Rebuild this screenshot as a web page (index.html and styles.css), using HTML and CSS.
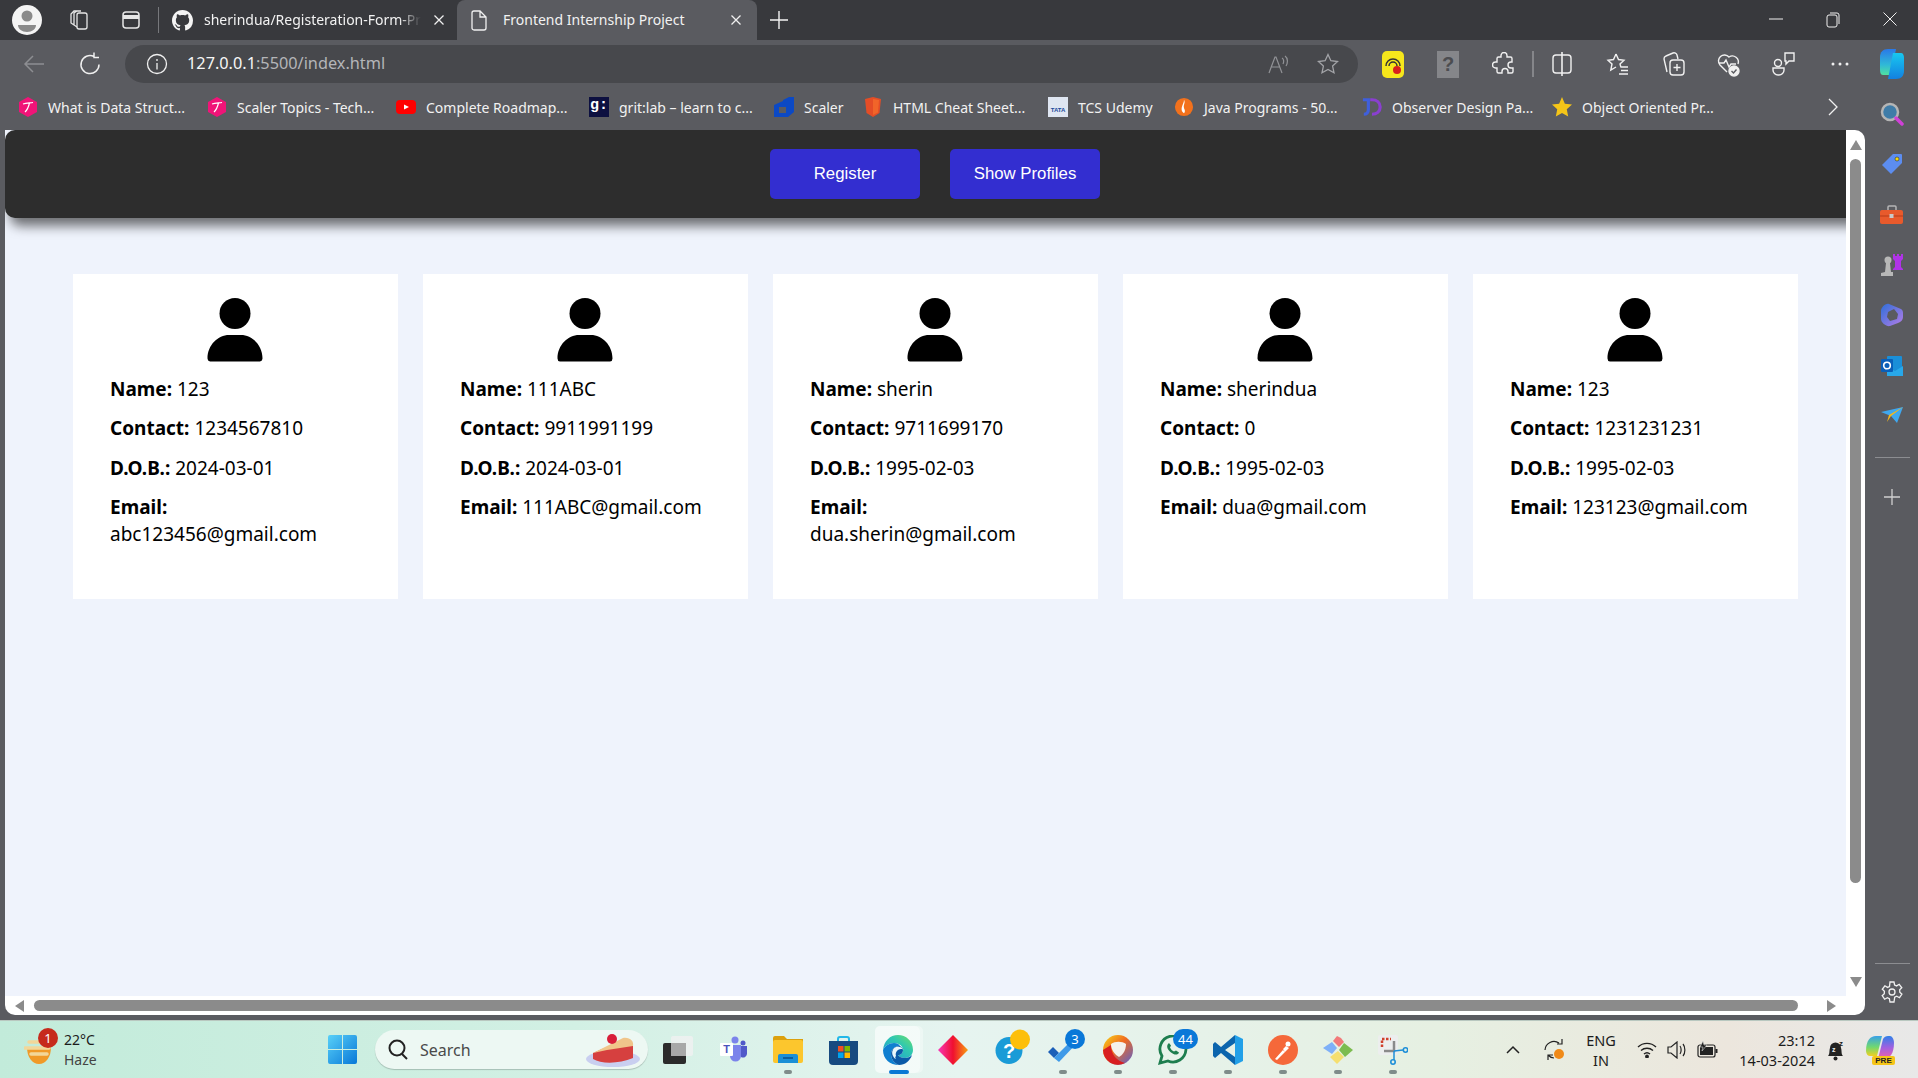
FILE: index.html
```html
<!DOCTYPE html>
<html lang="en">
<head>
    <meta charset="UTF-8">
    <title>Frontend Internship Project</title>
    <link rel="stylesheet" href="styles.css">
</head>
<body>
<div class="window">
    <!-- Tab strip -->
    <div class="tabstrip">
        <div class="strip-btn">
            <svg width="30" height="30" viewBox="0 0 30 30"><circle cx="15" cy="15" r="15" fill="#f4f4f4"/><circle cx="15" cy="11" r="5.5" fill="#8a8a8a"/><path d="M6 20h18c0 4-4 7-9 7s-9-3-9-7z" fill="#8a8a8a"/></svg>
        </div>
        <div class="strip-btn">
            <svg width="24" height="24" viewBox="0 0 24 24" fill="none" stroke="#e6e6e6" stroke-width="1.3"><rect x="10" y="5" width="10" height="16" rx="2"/><path d="M10 19l-3-2V5l3-2h4M7 17l-3-2V6l3-3h4"/></svg>
        </div>
        <div class="strip-btn">
            <svg width="22" height="22" viewBox="0 0 22 22" fill="none" stroke="#e6e6e6" stroke-width="1.5"><rect x="3" y="3" width="16" height="16" rx="3"/><path d="M3 8h16" stroke-width="4"/></svg>
        </div>
        <div class="strip-sep"></div>
        <div class="tab">
            <svg class="tab-icon" width="21" height="21" viewBox="0 0 16 16"><path fill="#f4f4f4" d="M8 0C3.58 0 0 3.58 0 8c0 3.54 2.29 6.53 5.47 7.59.4.07.55-.17.55-.38 0-.19-.01-.82-.01-1.49-2.01.37-2.53-.49-2.69-.94-.09-.23-.48-.94-.82-1.13-.28-.15-.68-.52-.01-.53.63-.01 1.08.58 1.23.82.72 1.21 1.87.87 2.33.66.07-.52.28-.87.51-1.07-1.78-.2-3.64-.89-3.64-3.95 0-.87.31-1.59.82-2.15-.08-.2-.36-1.02.08-2.12 0 0 .67-.21 2.2.82.64-.18 1.32-.27 2-.27.68 0 1.36.09 2 .27 1.53-1.04 2.2-.82 2.2-.82.44 1.1.16 1.92.08 2.12.51.56.82 1.27.82 2.15 0 3.07-1.87 3.75-3.65 3.95.29.25.54.73.54 1.48 0 1.07-.01 1.93-.01 2.2 0 .21.15.46.55.38A8.013 8.013 0 0016 8c0-4.42-3.58-8-8-8z"/></svg>
            <span class="tab-title faded">sherindua/Registeration-Form-Pr</span>
            <svg class="tab-close" width="12" height="12" viewBox="0 0 12 12" stroke="#f0f0f0" stroke-width="1.3"><path d="M1.5 1.5l9 9M10.5 1.5l-9 9"/></svg>
        </div>
        <div class="tab active">
            <svg class="tab-icon" width="16" height="21" viewBox="0 0 16 21" fill="none" stroke="#f0f0f0" stroke-width="1.3"><path d="M3 1h6l6 6v11a2 2 0 0 1-2 2H3a2 2 0 0 1-2-2V3a2 2 0 0 1 2-2zM9 1v6h6"/></svg>
            <span class="tab-title">Frontend Internship Project</span>
            <svg class="tab-close" width="12" height="12" viewBox="0 0 12 12" stroke="#f0f0f0" stroke-width="1.3"><path d="M1.5 1.5l9 9M10.5 1.5l-9 9"/></svg>
        </div>
        <div class="new-tab">
            <svg width="18" height="18" viewBox="0 0 18 18" stroke="#f4f4f4" stroke-width="1.4"><path d="M9 0v18M0 9h18"/></svg>
        </div>
        <div class="win-controls">
            <div class="win-btn"><svg width="14" height="14" viewBox="0 0 14 14" stroke="#f0f0f0"><path d="M0 7h14"/></svg></div>
            <div class="win-btn"><svg width="14" height="16" viewBox="0 0 14 16" fill="none" stroke="#f0f0f0"><rect x="1" y="3" width="10" height="12" rx="2"/><path d="M4 1h7a2 2 0 0 1 2 2v9"/></svg></div>
            <div class="win-btn"><svg width="14" height="14" viewBox="0 0 14 14" stroke="#f0f0f0"><path d="M.5.5l13 13M13.5.5l-13 13"/></svg></div>
        </div>
    </div>

    <!-- Address bar and toolbar -->
    <div class="toolbar">
        <div class="nav-btn"><svg width="22" height="20" viewBox="0 0 22 20" fill="none" stroke="#8d8e92" stroke-width="1.5"><path d="M21 10H2M10 2l-8 8 8 8"/></svg></div>
        <div class="nav-btn"><svg width="22" height="24" viewBox="0 0 22 24" fill="none" stroke="#f0f0f0" stroke-width="1.5"><path d="M15 4.5a9 9 0 1 0 5 8M15 .5v5h5"/></svg></div>
        <div class="addressbar">
            <svg class="info-icon" width="22" height="22" viewBox="0 0 22 22" fill="none" stroke="#f0f0f0" stroke-width="1.3"><circle cx="11" cy="11" r="9.5"/><path d="M11 10v6.500M11 6v2"/></svg>
            <span class="url"><span class="url-host">127.0.0.1</span>:5500/index.html</span>
            <div class="address-actions">
                <div class="address-btn"><svg width="22" height="22" viewBox="0 0 22 22" fill="none" stroke="#929397" stroke-width="1.2"><path d="M1 20L7 4h1l6 16M3.500 14h8M14 5c2 1 2 4 1 6M17 3c3 2 3 7 1 10"/></svg></div>
                <div class="address-btn"><svg width="22" height="22" viewBox="0 0 22 22" fill="none" stroke="#a3a4a8" stroke-width="1.3"><path d="M11 1.500l2.900 6.200 6.700.8-5 4.600 1.400 6.700-6-3.400-6 3.400 1.400-6.700-5-4.600 6.700-.8z"/></svg></div>
            </div>
        </div>
        <div class="tools">
            <div class="tool"><svg width="22" height="27" viewBox="0 0 22 27"><rect width="22" height="27" rx="5" fill="#f6e71c"/><path d="M4 15a7 7 0 0 1 14 0M7 15a4 4 0 0 1 8 0" fill="none" stroke="#333" stroke-width="1.500"/><circle cx="15" cy="19" r="4" fill="#d8201c"/></svg></div>
            <div class="tool"><svg width="22" height="27" viewBox="0 0 22 27"><rect width="22" height="27" fill="#85868a"/><text x="11" y="20" text-anchor="middle" class="svg-q">?</text></svg></div>
            <div class="tool"><svg width="24" height="24" viewBox="0 0 24 24" fill="none" stroke="#f0f0f0" stroke-width="1.4"><path d="M9 3.500a3 3 0 0 1 6 0V5h3.500A1.500 1.500 0 0 1 20 6.500V10h-1a3 3 0 0 0 0 6h2v3.500a1.500 1.500 0 0 1-1.500 1.500H16v-1.500a3 3 0 0 0-6 0V21H6.500A1.500 1.500 0 0 1 5 19.500V16H3.500a3 3 0 0 1 0-6H5V6.500A1.500 1.500 0 0 1 6.500 5H9z"/></svg></div>
            <div class="tool-sep"></div>
            <div class="tool"><svg width="22" height="24" viewBox="0 0 22 24" fill="none" stroke="#f0f0f0" stroke-width="1.4"><rect x="2" y="3" width="18" height="18" rx="3"/><path d="M11 0v24" stroke-width="1.600"/></svg></div>
            <div class="tool"><svg width="24" height="24" viewBox="0 0 24 24" fill="none" stroke="#f0f0f0" stroke-width="1.4"><path d="M10 2l2.500 5.500 5.500.7-4 3.800 1 3.500M10 2L7.500 7.500 2 8.200l4 3.800-1.200 6L10 15M15 15h7M15 18.500h7M13 22h9" /></svg></div>
            <div class="tool"><svg width="24" height="26" viewBox="0 0 24 26" fill="none" stroke="#f0f0f0" stroke-width="1.4"><path d="M6 21L3 8a3 3 0 0 1 2-3l7-3a3 3 0 0 1 4 2l1 4"/><rect x="9" y="9" width="14" height="15" rx="3"/><path d="M16 13v7M12.500 16.500h7"/></svg></div>
            <div class="tool"><svg width="24" height="26" viewBox="0 0 24 26" fill="none" stroke="#f0f0f0" stroke-width="1.4"><path d="M10 21L3 14a6 6 0 0 1 9-8 6 6 0 0 1 9 7M2 12h5l2-3 3 7 2-3h5"/><circle cx="17" cy="20" r="5" fill="#f0f0f0"/><path d="M14.500 20l2 2 3-3.500" stroke="#5a5b60"/></svg></div>
            <div class="tool"><svg width="24" height="26" viewBox="0 0 24 26" fill="none" stroke="#f0f0f0" stroke-width="1.4"><circle cx="6" cy="12" r="3.500"/><path d="M1 17h11v2a5 5 0 0 1-5 5H6a5 5 0 0 1-5-5zM13 2h9v8h-5l-3 3v-3h-1z"/></svg></div>
            <div class="tool"><svg width="20" height="4" viewBox="0 0 20 4" fill="#f0f0f0"><circle cx="3" cy="2" r="1.500"/><circle cx="10" cy="2" r="1.500"/><circle cx="17" cy="2" r="1.500"/></svg></div>
            <div class="tool copilot-tool"><svg width="30" height="36" viewBox="0 0 30 36"><defs><linearGradient id="cpA" x1="0" y1="0" x2="0" y2="1"><stop offset="0" stop-color="#2a78e8"/><stop offset=".6" stop-color="#2fb8d8"/><stop offset="1" stop-color="#50e0a0"/></linearGradient><linearGradient id="cpB" x1="0" y1="0" x2="0" y2="1"><stop offset="0" stop-color="#18c8f0"/><stop offset="1" stop-color="#1380e0"/></linearGradient></defs><path d="M3 24V11C3 6 6 3 11 3h8l-5 26H6c-2 0-3-2-3-5z" fill="url(#cpA)"/><path d="M27 12v13c0 5-3 8-8 8h-8l5-26h8c2 0 3 2 3 5z" fill="url(#cpB)"/></svg></div>
        </div>
    </div>

    <div class="body-row">
        <div class="main-col">
            <!-- Favorites bar -->
            <div class="bookmarks">
                <div class="bookmark"><svg viewBox="0 0 20 20"><path d="M10 0l9 5v10l-9 5-9-5V5z" fill="#f01478"/><path d="M5 7c3-1 7-1 10-1.500M11.500 6c-1 4-2 7-4.500 9" fill="none" stroke="#fff" stroke-width="1.200"/></svg><span>What is Data Struct...</span></div>
                <div class="bookmark"><svg viewBox="0 0 20 20"><path d="M10 0l9 5v10l-9 5-9-5V5z" fill="#f01478"/><path d="M5 7c3-1 7-1 10-1.500M11.500 6c-1 4-2 7-4.500 9" fill="none" stroke="#fff" stroke-width="1.200"/></svg><span>Scaler Topics - Tech...</span></div>
                <div class="bookmark"><svg viewBox="0 0 20 20"><rect y="3" width="20" height="14" rx="4" fill="#f00"/><path d="M8 7.500l5 2.500-5 2.500z" fill="#fff"/></svg><span>Complete Roadmap...</span></div>
                <div class="bookmark"><div class="grit-icon">g:</div><span>grit:lab – learn to c...</span></div>
                <div class="bookmark"><svg viewBox="0 0 20 20"><path d="M0 8l9-4v-1l6-3h5v15l-6 5H0z" fill="#0c49c4"/><path d="M5 10h7v6H5z" fill="#5a5b60"/></svg><span>Scaler</span></div>
                <div class="bookmark"><svg viewBox="0 0 18 20"><path d="M1 2l8-2 8 2-1.500 14L9 20l-6.500-4z" fill="#e44d26"/><path d="M9 2v16l5-2.500L15 3z" fill="#f16529"/></svg><span>HTML Cheat Sheet...</span></div>
                <div class="bookmark"><div class="tata-icon">TATA</div><span>TCS Udemy</span></div>
                <div class="bookmark"><svg viewBox="0 0 20 22"><circle cx="10" cy="11" r="10" fill="#f2711c"/><path d="M10 3c2 4-1 5 0 9 .5 2 2 3 0 6-3-2-3-5-2-8 .5-2 2-4 2-7z" fill="#fff"/></svg><span>Java Programs - 50...</span></div>
                <div class="bookmark"><svg viewBox="0 0 22 22" fill="none" stroke-width="3.500"><path d="M1 3h6v11c0 3-2 5-5 5" stroke="#3f5fdc"/><path d="M9 3h2c5 0 9 3 9 8s-4 8-9 8" stroke="#8a3fd0"/></svg><span>Observer Design Pa...</span></div>
                <div class="bookmark"><svg viewBox="0 0 21 21"><path d="M10.500 0l3 7 7.500.8-5.500 5 1.500 7.700-6.500-3.800-6.500 3.800 1.500-7.700L0 7.800 7.500 7z" fill="#f5c518"/></svg><span>Object Oriented Pr...</span></div>
                <div class="bookmark-more"><svg width="10" height="20" viewBox="0 0 10 20" fill="none" stroke="#f0f0f0" stroke-width="1.300"><path d="M1 2l8 8-8 8"/></svg></div>
            </div>

            <!-- Browser viewport -->
            <div class="frame">
                <div class="viewport">
                    <div class="site-header">
                        <button class="site-btn">Register</button>
                        <button class="site-btn">Show Profiles</button>
                    </div>
                    <div class="profiles">
                        <div class="profile-card">
                            <svg class="profile-icon" width="64" height="64" viewBox="0 0 64 64"><circle cx="32" cy="15.500" r="15.500"/><path d="M7 63.500h50a3 3 0 0 0 2.500-3C59.500 47 49 37 38 37H26C15 37 4.500 47 4.500 60.500a3 3 0 0 0 2.500 3z"/></svg>
                            <p><strong>Name:</strong> 123</p>
                            <p><strong>Contact:</strong> 1234567810</p>
                            <p><strong>D.O.B.:</strong> 2024-03-01</p>
                            <p><strong>Email:</strong> abc123456@gmail.com</p>
                        </div>
                        <div class="profile-card">
                            <svg class="profile-icon" width="64" height="64" viewBox="0 0 64 64"><circle cx="32" cy="15.500" r="15.500"/><path d="M7 63.500h50a3 3 0 0 0 2.500-3C59.500 47 49 37 38 37H26C15 37 4.500 47 4.500 60.500a3 3 0 0 0 2.500 3z"/></svg>
                            <p><strong>Name:</strong> 111ABC</p>
                            <p><strong>Contact:</strong> 9911991199</p>
                            <p><strong>D.O.B.:</strong> 2024-03-01</p>
                            <p><strong>Email:</strong> 111ABC@gmail.com</p>
                        </div>
                        <div class="profile-card">
                            <svg class="profile-icon" width="64" height="64" viewBox="0 0 64 64"><circle cx="32" cy="15.500" r="15.500"/><path d="M7 63.500h50a3 3 0 0 0 2.500-3C59.500 47 49 37 38 37H26C15 37 4.500 47 4.500 60.500a3 3 0 0 0 2.500 3z"/></svg>
                            <p><strong>Name:</strong> sherin</p>
                            <p><strong>Contact:</strong> 9711699170</p>
                            <p><strong>D.O.B.:</strong> 1995-02-03</p>
                            <p><strong>Email:</strong> dua.sherin@gmail.com</p>
                        </div>
                        <div class="profile-card">
                            <svg class="profile-icon" width="64" height="64" viewBox="0 0 64 64"><circle cx="32" cy="15.500" r="15.500"/><path d="M7 63.500h50a3 3 0 0 0 2.500-3C59.500 47 49 37 38 37H26C15 37 4.500 47 4.500 60.500a3 3 0 0 0 2.500 3z"/></svg>
                            <p><strong>Name:</strong> sherindua</p>
                            <p><strong>Contact:</strong> 0</p>
                            <p><strong>D.O.B.:</strong> 1995-02-03</p>
                            <p><strong>Email:</strong> dua@gmail.com</p>
                        </div>
                        <div class="profile-card">
                            <svg class="profile-icon" width="64" height="64" viewBox="0 0 64 64"><circle cx="32" cy="15.500" r="15.500"/><path d="M7 63.500h50a3 3 0 0 0 2.500-3C59.500 47 49 37 38 37H26C15 37 4.500 47 4.500 60.500a3 3 0 0 0 2.500 3z"/></svg>
                            <p><strong>Name:</strong> 123</p>
                            <p><strong>Contact:</strong> 1231231231</p>
                            <p><strong>D.O.B.:</strong> 1995-02-03</p>
                            <p><strong>Email:</strong> 123123@gmail.com</p>
                        </div>
                    </div>
                </div>
                <div class="vscroll">
                    <div class="arrow-up"></div>
                    <div class="vthumb"></div>
                    <div class="arrow-down"></div>
                </div>
                <div class="hscroll">
                    <div class="arrow-left"></div>
                    <div class="hthumb"></div>
                    <div class="arrow-right"></div>
                </div>
                <div class="scroll-corner"></div>
            </div>
        </div>

        <!-- Edge sidebar -->
        <div class="sidebar">
            <div class="side-btn"><svg width="24" height="24" viewBox="0 0 24 24"><circle cx="10" cy="10" r="8" fill="#3f7ca8" stroke="#b5b5b5" stroke-width="2.500"/><path d="M16 16l6 6" stroke="#d040d8" stroke-width="3.500" stroke-linecap="round"/></svg></div>
            <div class="side-btn"><svg width="22" height="22" viewBox="0 0 22 22"><path d="M12 1h8a1 1 0 0 1 1 1v8L10 21 1 12z" fill="#5c8df0"/><circle cx="16" cy="6" r="2" fill="#f5d90a" stroke="#333" stroke-width=".6"/></svg></div>
            <div class="side-btn"><svg width="24" height="20" viewBox="0 0 24 20"><path d="M8 5V2a1 1 0 0 1 1-1h6a1 1 0 0 1 1 1v3" fill="none" stroke="#b5b5b5" stroke-width="1.500"/><rect y="5" width="23" height="14" rx="2" fill="#e85a2c"/><path d="M0 11h23" stroke="#b53a18" stroke-width="1"/><rect x="9.500" y="9" width="4" height="4" fill="#c9c9c9"/></svg></div>
            <div class="side-btn"><svg width="24" height="24" viewBox="0 0 24 24"><path d="M13 1h2v2h2V1h2v2h2V1h2v5l-2 2v6l2 2v1H13v-1l2-2V8l-2-2z" fill="#b033e8"/><circle cx="8" cy="7" r="3.500" fill="#b8b8b8"/><path d="M6 10h4l1 9h2v4H1v-3l4-1z" fill="#b8b8b8"/></svg></div>
            <div class="side-btn"><svg width="22" height="24" viewBox="0 0 22 24"><defs><linearGradient id="m3" x1="0" y1="0" x2="1" y2="1"><stop offset="0" stop-color="#2f6fd8"/><stop offset="1" stop-color="#b57de8"/></linearGradient></defs><path d="M8 1l12 5c2 1 2 3 2 5v3c0 3-2 5-5 6l-8 3c-3 1-9-3-9-7V8c0-3 4-8 8-7z" fill="url(#m3)"/><path d="M7 9l6-3 4 5-1 5-7 2-3-4z" fill="#5a5b60"/></svg></div>
            <div class="side-btn"><svg width="22" height="22" viewBox="0 0 22 22"><rect x="6" y="1" width="15" height="20" rx="1" fill="#1a8fd8"/><path d="M6 11l8 5 8-5v10H6z" fill="#28a8ea"/><rect y="4" width="12" height="13" rx="1" fill="#0a5fb8"/><circle cx="6" cy="10.500" r="3.300" fill="none" stroke="#fff" stroke-width="1.600"/></svg></div>
            <div class="side-btn"><svg width="22" height="18" viewBox="0 0 22 18"><path d="M0 5l22-5-6 16-6-7z" fill="#3fa8f0"/><path d="M22 0L8 8l-2 7 4-6z" fill="#f5b81a"/></svg></div>
            <div class="side-divider"></div>
            <div class="side-btn side-add"><svg width="16" height="16" viewBox="0 0 16 16" stroke="#d0d0d0" stroke-width="1.300"><path d="M8 0v16M0 8h16"/></svg></div>
            <div class="side-divider side-bottom"></div>
            <div class="side-btn side-gear"><svg width="22" height="22" viewBox="0 0 22 22" fill="none" stroke="#f0f0f0" stroke-width="1.300"><circle cx="11" cy="11" r="3"/><path d="M9 1h4l.6 3 2 .9 2.600-1.600 2.600 3.500-2.100 2 .1 2.400 2.100 2-2.400 3.500-2.800-1.500-2 1L13 21H9l-.6-3.300-2-1-2.800 1.500L1.200 14.700l2.100-2 .1-2.400-2.100-2 2.600-3.500 2.600 1.600 2-.9z"/></svg></div>
        </div>
    </div>

    <!-- Windows taskbar -->
    <div class="taskbar">
        <div class="weather">
            <svg class="weather-icon" width="30" height="30" viewBox="0 0 30 30"><path d="M3 12h24c0 10-5 17-12 17S3 22 3 12z" fill="#f09a28"/><path d="M5 7h14M1 13h24M7 19h16" stroke="#f2d79a" stroke-width="3.500" stroke-linecap="round"/></svg>
            <span class="weather-badge">1</span>
            <div class="weather-text"><span>22°C</span><span>Haze</span></div>
        </div>
        <div class="start">
            <svg width="29" height="29" viewBox="0 0 29 29"><defs><linearGradient id="winA" x1="0" y1="0" x2="1" y2="1"><stop offset="0" stop-color="#58d0f8"/><stop offset="1" stop-color="#0878d8"/></linearGradient></defs><path d="M0 2a2 2 0 0 1 2-2h12v14H0zM15 0h12a2 2 0 0 1 2 2v12H15zM0 15h14v14H2a2 2 0 0 1-2-2zM15 15h14v12a2 2 0 0 1-2 2H15z" fill="url(#winA)"/></svg>
        </div>
        <div class="searchbox">
            <svg width="20" height="21" viewBox="0 0 20 21" fill="none" stroke="#222" stroke-width="2"><circle cx="9" cy="9" r="7.500"/><path d="M14 15l5 5"/></svg>
            <span class="search-label">Search</span>
            <svg class="pie" width="56" height="34" viewBox="0 0 56 34"><ellipse cx="28" cy="26" rx="27" ry="8" fill="#c9cff0"/><path d="M8 20L38 7c6-1 10 2 10 6v12C34 31 16 31 8 26z" fill="#d6403f"/><path d="M8 20L38 5c7-1 11 3 10 8L22 17z" fill="#f0c58a"/><circle cx="27" cy="6" r="5" fill="#d81e3a"/></svg>
        </div>
        <div class="apps">
            <div class="app"><svg width="30" height="28" viewBox="0 0 30 28"><rect y="7" width="23" height="21" rx="2" fill="#2b2b2b"/><rect x="8" y="0" width="22" height="20" rx="2" fill="#eef0f0" opacity=".88"/><rect x="8" y="7" width="15" height="13" fill="#a8a8a8"/></svg></div>
            <div class="app"><svg width="27" height="27" viewBox="0 0 27 27"><circle cx="15" cy="4" r="3.500" fill="#7b83eb"/><circle cx="23" cy="7" r="2.500" fill="#5059c9"/><path d="M10 9h11v11a5 5 0 0 1-11 0z" fill="#7b83eb"/><path d="M21 10h6v8a4 4 0 0 1-6 3z" fill="#5059c9"/><rect y="7" width="13" height="13" rx="1" fill="#fff"/><text x="6.500" y="17" text-anchor="middle" class="svg-t">T</text></svg></div>
            <div class="app has-dot"><svg width="30" height="27" viewBox="0 0 30 27"><path d="M0 2a2 2 0 0 1 2-2h9l3 3h16v6H0z" fill="#dca00c"/><rect y="4" width="30" height="23" rx="2" fill="#fcc62d"/><path d="M5 27v-7a2 2 0 0 1 2-2h16a2 2 0 0 1 2 2v7z" fill="#1b8fd6"/><path d="M10 22h10" stroke="#0d5f9e" stroke-width="2"/></svg></div>
            <div class="app"><svg width="29" height="30" viewBox="0 0 29 30"><path d="M9 7V4a2 2 0 0 1 2-2h7a2 2 0 0 1 2 2v3" fill="none" stroke="#22b8e8" stroke-width="2"/><path d="M0 6h29v20a4 4 0 0 1-4 4H4a4 4 0 0 1-4-4z" fill="#174a80"/><rect x="9" y="11" width="5.500" height="5.500" fill="#f25022"/><rect x="15.500" y="11" width="5.500" height="5.500" fill="#7fba00"/><rect x="9" y="17.500" width="5.500" height="5.500" fill="#00a4ef"/><rect x="15.500" y="17.500" width="5.500" height="5.500" fill="#ffb900"/></svg></div>
            <div class="app app-active"><svg width="30" height="30" viewBox="0 0 30 30"><defs><linearGradient id="edgeA" x1="0" y1="1" x2="1" y2="0"><stop offset="0" stop-color="#1a9ad8"/><stop offset=".6" stop-color="#30c8b0"/><stop offset="1" stop-color="#6ee06a"/></linearGradient></defs><path d="M15 0c8 0 15 6 15 15 0 5-4 8-8 8-3 0-6-1-7-3 3 0 5-2 5-5 0-4-4-7-9-7-5 0-9 3-11 7C1 6 7 0 15 0z" fill="url(#edgeA)"/><path d="M0 15c2-4 6-7 11-7 3 0 5 1 6 3-5 0-9 3-9 8 0 5 3 9 8 11C7 30 0 24 0 15z" fill="#0f7fd0"/><path d="M16 30c-5-2-8-6-8-11 0-5 4-8 9-8 2 1 3 3 3 4 0 3-2 5-5 5 1 2 4 3 7 3 3 0 5-1 7-3-2 6-7 10-13 10z" fill="#0b5aa8"/><path d="M13 21c-1-3 1-7 5-7 2 0 3 0 2 1-.5-3-4-4-7-3-3 1-5 5-3 9 1 2 2 3 3 3-1-1-1-2 0-3z" fill="#e8f6fb"/></svg></div>
            <div class="app"><svg width="30" height="30" viewBox="0 0 30 30"><defs><linearGradient id="diaA" x1="0" y1="0" x2="1" y2="0"><stop offset="0" stop-color="#f838b8"/><stop offset=".5" stop-color="#f01030"/><stop offset="1" stop-color="#f8a010"/></linearGradient></defs><path d="M15 0l15 15-15 15L0 15z" fill="url(#diaA)"/></svg></div>
            <div class="app"><svg width="46" height="44" viewBox="0 0 46 44"><circle cx="24" cy="22.500" r="13.500" fill="#1a9bd7"/><text x="24" y="29.500" text-anchor="middle" class="svg-help">?</text><circle cx="35" cy="11.500" r="10" fill="#fdbf0a"/></svg></div>
            <div class="app has-dot"><svg width="30" height="30" viewBox="0 0 30 30"><path d="M0 17l5-5 6 6-5 5z" fill="#1b5fb8"/><path d="M6 23L26 3l4 4L11 27z" fill="#3f9ae8"/></svg><span class="app-badge">3</span></div>
            <div class="app has-dot"><svg width="30" height="30" viewBox="0 0 30 30"><defs><linearGradient id="opA" x1="0" y1="0" x2="1" y2="1"><stop offset="0" stop-color="#f8d818"/><stop offset=".45" stop-color="#f06a20"/><stop offset="1" stop-color="#5060d8"/></linearGradient></defs><circle cx="15" cy="15" r="15" fill="url(#opA)"/><path d="M0 15a15 15 0 0 0 22 13C14 26 8 20 8 10z" fill="#d81e20"/><path d="M8 9c4-3 11-3 15 0 0 6-3 11-7 13-4-2-8-7-8-13z" fill="#f4f1ec"/></svg></div>
            <div class="app has-dot"><svg width="30" height="30" viewBox="0 0 30 30"><path d="M2 28l2-7a13 13 0 1 1 6 5z" fill="none" stroke="#1d7d4e" stroke-width="2.800"/><path d="M10 9c-2 3 0 6 3 8.500s7 3 8 0l-3-2-2 1c-2-1-3-2-4-4l1-2-2-2.500z" fill="#1d7d4e"/></svg><span class="app-badge wide">44</span></div>
            <div class="app has-dot"><svg width="30" height="30" viewBox="0 0 30 30"><path d="M22 0L8 12 2 7 0 9v12l2 2 6-5 14 12v-8L12 15 22 8z" fill="#0c65ad"/><path d="M22 0l8 4v22l-8 4z" fill="#22a0e8"/></svg></div>
            <div class="app has-dot"><svg width="30" height="30" viewBox="0 0 30 30"><circle cx="15" cy="15" r="15" fill="#f5683a"/><circle cx="20" cy="9" r="2.500" fill="#fff"/><path d="M7 24l8-9 2 2-8 8zM15 14l3-3 3 2-4 4z" fill="#fff"/></svg></div>
            <div class="app has-dot"><svg width="30" height="28" viewBox="0 0 30 28"><path d="M14 0l4 2 3 4-5 5-6-6z" fill="#f27a7a"/><path d="M9 6l5 6-5 6-9-6z" fill="#7fb0f8"/><path d="M21 7l9 7-8 7-6-7z" fill="#7cbc50"/><path d="M15 15l6 6-7 7-7-7z" fill="#f5df70"/></svg></div>
            <div class="app has-dot"><svg width="30" height="30" viewBox="0 0 30 30"><rect width="20" height="20" rx="2" fill="#eceeee"/><path d="M4 12V4h9" fill="none" stroke="#d0402c" stroke-width="2.500" stroke-dasharray="2.500 1.500"/><path d="M16 6v10H6" fill="none" stroke="#8a8a8a" stroke-width="2.500"/><path d="M16 16l-0 9M16 16l9-1" stroke="#1f8fd8" stroke-width="1.500"/><circle cx="15" cy="27" r="2.200" fill="none" stroke="#1f8fd8" stroke-width="1.600"/><circle cx="27.500" cy="15" r="2.200" fill="none" stroke="#1f8fd8" stroke-width="1.600"/></svg></div>
        </div>
        <div class="tray">
            <div class="tray-chevron"><svg width="14" height="9" viewBox="0 0 14 9" fill="none" stroke="#222" stroke-width="1.500"><path d="M1 8l6-6 6 6"/></svg></div>
            <div class="tray-sync"><svg width="22" height="22" viewBox="0 0 22 22" fill="none" stroke="#222" stroke-width="1.200"><path d="M1 11a9 9 0 0 1 14-7M18 0v5h-5M4 21v-5h5M4 16a9 9 0 0 0 6 3"/><circle cx="15" cy="15" r="5" fill="#f08a18" stroke="none"/></svg></div>
            <div class="tray-lang"><span>ENG</span><span>IN</span></div>
            <div class="tray-icon wifi"><svg width="20" height="16" viewBox="0 0 20 16" fill="none" stroke="#222" stroke-width="1.400"><path d="M1 5a13 13 0 0 1 18 0M4 8.500a9 9 0 0 1 12 0M7 12a4.500 4.500 0 0 1 6 0"/><circle cx="10" cy="14.500" r="1.200" fill="#222"/></svg></div>
            <div class="tray-icon"><svg width="21" height="18" viewBox="0 0 21 18" fill="none" stroke="#222" stroke-width="1.200"><path d="M1 6h3l6-5v16l-6-5H1zM13 5c1.500 2 1.500 6 0 8M16 3c2.500 3 2.500 9 0 12"/></svg></div>
            <div class="tray-icon"><svg width="21" height="17" viewBox="0 0 21 17"><rect x="1" y="4" width="17" height="12" rx="2" fill="none" stroke="#222" stroke-width="1.200"/><rect x="3" y="6" width="13" height="8" fill="#222"/><path d="M6 0L3 6h3L5 10l5-6H7z" fill="#222" stroke="#eee" stroke-width=".5"/><rect x="18.500" y="8" width="2" height="4" fill="#222"/></svg></div>
            <div class="tray-clock"><span>23:12</span><span>14-03-2024</span></div>
            <div class="tray-bell"><svg width="18" height="22" viewBox="0 0 18 22"><path d="M1 17c2-2 1-5 2-8a5.500 5.500 0 0 1 11 0c1 3 0 6 2 8z" fill="#222"/><circle cx="8.500" cy="19.500" r="2" fill="#222"/><text x="12" y="7" class="svg-z">z</text><text x="5" y="13" class="svg-zz">z</text></svg></div>
            <div class="tray-copilot"><svg width="28" height="23" viewBox="0 0 28 23"><defs><linearGradient id="cpC" x1="0" y1="0" x2="0" y2="1"><stop offset="0" stop-color="#38a0e8"/><stop offset=".55" stop-color="#70d870"/><stop offset="1" stop-color="#f0d020"/></linearGradient><linearGradient id="cpD" x1="0" y1="0" x2="0" y2="1"><stop offset="0" stop-color="#3080e8"/><stop offset=".5" stop-color="#a060e0"/><stop offset="1" stop-color="#f060a8"/></linearGradient></defs><path d="M0 15C0 5 4 0 10 0h6L11 20H4c-2 0-4-2-4-5z" fill="url(#cpC)"/><path d="M28 7c0 10-4 16-10 16h-6l5-20c1-2 3-3 5-3h2c2 0 4 3 4 7z" fill="url(#cpD)"/></svg><span class="pre-tag">PRE</span></div>
        </div>
    </div>
</div>
</body>
</html>
```

FILE: styles.css
```css
:root {
    --strip: #38393d;
    --chrome: #5a5b60;
    --address: #47484c;
    --chrome-text: #f2f2f2;
    --page-bg: #eff3fc;
    --header-bg: #2d2d2d;
    --btn-blue: #332ed0;
    --scroll-thumb: #8b8b8b;
    --os-font: 'Noto Sans', 'Open Sans', sans-serif;
}

* {
    margin: 0;
    padding: 0;
    box-sizing: border-box;
}

html,
body {
    height: 100%;
    overflow: hidden;
}

body {
    font-family: var(--os-font);
    background-color: var(--chrome);
}

.window {
    height: 1078px;
    display: flex;
    flex-direction: column;
}

/* Tab strip */
.tabstrip {
    height: 40px;
    flex: none;
    display: flex;
    align-items: center;
    background-color: var(--strip);
    padding-left: 1px;
    color: var(--chrome-text);
}

.strip-btn {
    width: 52px;
    display: flex;
    justify-content: center;
}

.strip-sep {
    width: 1px;
    height: 26px;
    margin: 0 2px 0 1px;
    background-color: #77787c;
}

.tab {
    height: 40px;
    width: 296px;
    display: flex;
    align-items: center;
    padding: 0 12px 0 11px;
    font-size: 14px;
}

.tab.active {
    width: 300px;
    padding: 0 15px 0 14px;
    background-color: var(--chrome);
    border-radius: 8px 8px 0 0;
}

.tab-title {
    flex: 1;
    margin: 0 0 2px 11px;
    white-space: nowrap;
    overflow: hidden;
}

.tab.active .tab-title {
    margin-left: 16px;
}

.faded {
    -webkit-mask-image: linear-gradient(90deg, #000 90%, transparent);
    mask-image: linear-gradient(90deg, #000 90%, transparent);
}

.tab-close {
    flex: none;
    margin-left: 12px;
}

.new-tab {
    width: 44px;
    display: flex;
    justify-content: center;
}

.win-controls {
    margin-left: auto;
    display: flex;
}

.win-btn {
    width: 57px;
    display: flex;
    justify-content: center;
}

/* Toolbar */
.toolbar {
    height: 43px;
    flex: none;
    display: flex;
    align-items: flex-end;
    padding-left: 6px;
    background-color: var(--chrome);
}

.nav-btn {
    width: 56px;
    height: 38px;
    flex: none;
    display: flex;
    align-items: center;
    justify-content: center;
}

.addressbar {
    width: 1233px;
    height: 38px;
    flex: none;
    margin-left: 7px;
    display: flex;
    align-items: center;
    padding: 0 6px 0 21px;
    background-color: var(--address);
    border-radius: 19px;
}

.url {
    margin: 0 0 2px 19px;
    font-size: 16.300px;
    color: #b4b5b8;
}

.url-host {
    color: #f6f6f6;
}

.address-actions {
    margin-left: auto;
    display: flex;
}

.address-btn {
    width: 49px;
    display: flex;
    justify-content: center;
}

.tools {
    margin-left: 7px;
    height: 38px;
    flex: none;
    display: flex;
    align-items: center;
}

.tool {
    width: 55.500px;
    flex: none;
    display: flex;
    justify-content: center;
}

.tool-sep {
    width: 3px;
    height: 26px;
    flex: none;
    border-left: 2px solid #85868a;
}

.copilot-tool {
    margin-left: -3px;
}

.svg-q {
    font: bold 20px 'Liberation Sans', sans-serif;
    fill: #4c4d51;
}

/* Favorites + page */
.body-row {
    flex: 1;
    min-height: 0;
    display: flex;
}

.main-col {
    width: 1865px;
    flex: none;
    display: flex;
    flex-direction: column;
}

.bookmarks {
    height: 47px;
    flex: none;
    display: grid;
    grid-template-columns: 189px 189px 193px 185px 89px 185px 126px 188px 190px 276px auto;
    align-items: center;
    padding: 1px 0 0 18px;
    font-size: 14px;
    color: var(--chrome-text);
}

.bookmark {
    display: flex;
    align-items: center;
    white-space: nowrap;
}

.bookmark svg,
.grit-icon,
.tata-icon {
    flex: none;
    width: 20px;
    height: 20px;
    margin-right: 10px;
}

.bookmark-more {
    display: flex;
}

.grit-icon {
    background-color: #0d1040;
    color: #fff;
    font: bold 15px/17px 'Liberation Mono', monospace;
    text-align: center;
}

.tata-icon {
    background-color: #dfe6f2;
    color: #1a4a9c;
    font: bold 6px/26px 'Liberation Sans', sans-serif;
    text-align: center;
}

.frame {
    flex: 1;
    min-height: 0;
    margin: 0 0 5px 5px;
    display: grid;
    grid-template-columns: 1fr 19px;
    grid-template-rows: 1fr 19px;
    background-color: #fff;
    border-radius: 0 10px 10px 10px;
    overflow: hidden;
}

/* The page inside the browser */
.viewport {
    min-width: 0;
    min-height: 0;
    overflow: hidden;
    background-color: var(--page-bg);
}

.site-header {
    width: 1860px;
    height: 88px;
    display: flex;
    align-items: center;
    justify-content: center;
    gap: 30px;
    background-color: var(--header-bg);
    border-radius: 10px;
    box-shadow: 5px 8px 12px rgba(0, 0, 0, 0.55);
}

.site-btn {
    width: 150px;
    height: 50px;
    border: none;
    border-radius: 5px;
    background-color: var(--btn-blue);
    color: #fff;
    font: 16.800px 'Liberation Sans', Arial, sans-serif;
}

.profiles {
    width: 1730px;
    margin: 56px 0 0 68px;
    display: grid;
    grid-template-columns: repeat(5, 325px);
    gap: 25px;
}

.profile-card {
    height: 325px;
    padding: 24px 38px 0 37px;
    background-color: #fff;
    color: #000;
    font-size: 19px;
    line-height: 27px;
}

.profile-icon {
    display: block;
    margin: 0 auto 14px;
}

.profile-card p {
    margin-bottom: 12.400px;
}

.profile-card strong {
    font-weight: 700;
}

/* Scrollbars */
.vscroll {
    display: flex;
    flex-direction: column;
    align-items: center;
    padding-top: 10px;
}

.vthumb {
    width: 11px;
    height: 724px;
    margin-top: 9px;
    background-color: var(--scroll-thumb);
    border-radius: 6px;
}

.arrow-up,
.arrow-down {
    width: 0;
    height: 0;
    border-left: 6px solid transparent;
    border-right: 6px solid transparent;
}

.arrow-up {
    border-bottom: 10px solid var(--scroll-thumb);
}

.arrow-down {
    margin-top: auto;
    margin-bottom: 9px;
    border-top: 10px solid var(--scroll-thumb);
}

.hscroll {
    display: flex;
    align-items: center;
    padding: 0 10px;
}

.hthumb {
    width: 1764px;
    height: 11px;
    margin-left: 10px;
    background-color: var(--scroll-thumb);
    border-radius: 6px;
}

.arrow-left,
.arrow-right {
    width: 0;
    height: 0;
    border-top: 6px solid transparent;
    border-bottom: 6px solid transparent;
}

.arrow-left {
    border-right: 9px solid var(--scroll-thumb);
}

.arrow-right {
    margin-left: auto;
    border-left: 9px solid var(--scroll-thumb);
}

/* Sidebar */
.sidebar {
    flex: 1;
    display: flex;
    flex-direction: column;
    align-items: center;
    padding: 6px 0 0 1px;
}

.side-btn {
    height: 50.300px;
    width: 100%;
    flex: none;
    display: flex;
    align-items: center;
    justify-content: center;
}

.side-divider {
    width: 35px;
    height: 1px;
    flex: none;
    margin-top: 16px;
    background-color: #8c8d91;
}

.side-add {
    margin-top: 14px;
}

.side-bottom {
    margin-top: auto;
    margin-bottom: 3px;
}

.side-gear {
    margin-bottom: 3px;
}

/* Taskbar */
.taskbar {
    height: 58px;
    flex: none;
    display: flex;
    align-items: center;
    color: #1c1c1c;
    background: linear-gradient(90deg, #c2ebda 0%, #d2f0e4 30%, #e6f4f0 50%, #e6f0e2 75%, #ece6dd 90%, #e8e8e8 100%);
    border-top: 1px solid #b9c8c0;
}

.weather {
    width: 328px;
    height: 100%;
    display: flex;
    align-items: center;
    padding-left: 24px;
    position: relative;
    font-size: 14px;
}

.weather-badge {
    position: absolute;
    left: 38px;
    top: 7px;
    width: 20px;
    height: 20px;
    border-radius: 50%;
    background-color: #c62a1c;
    color: #fff;
    font-size: 13px;
    line-height: 20px;
    text-align: center;
}

.weather-text {
    display: flex;
    flex-direction: column;
    margin-left: 10px;
    line-height: 20px;
}

.weather-text span:last-child {
    color: #444;
}

.start {
    width: 47px;
    display: flex;
}

.searchbox {
    width: 273px;
    height: 39px;
    display: flex;
    align-items: center;
    padding: 0 7px 0 13px;
    background-color: #edf8f3;
    border-radius: 20px;
    box-shadow: 0 1px 1px rgba(0, 0, 0, 0.2);
}

.search-label {
    margin-left: 12px;
    font-size: 16px;
    color: #4a4a4a;
}

.pie {
    margin-left: auto;
}

.apps {
    margin-left: 2.500px;
    display: flex;
    height: 100%;
}

.app {
    width: 55px;
    height: 100%;
    display: flex;
    align-items: center;
    justify-content: center;
    position: relative;
}

.has-dot::after {
    content: '';
    position: absolute;
    left: 23.500px;
    bottom: 4px;
    width: 8px;
    height: 4px;
    border-radius: 2px;
    background-color: #7f8c8a;
}

.app-active::before {
    content: '';
    position: absolute;
    left: 4.500px;
    top: 5px;
    width: 45px;
    height: 47px;
    z-index: 0;
    background-color: rgba(255, 255, 255, 0.6);
    border-radius: 5px;
    box-shadow: 3px 0 0 rgba(255, 255, 255, 0.35);
}

.app-active svg {
    position: relative;
}

.app-active::after {
    content: '';
    position: absolute;
    left: 18.500px;
    bottom: 4px;
    width: 20px;
    height: 4px;
    border-radius: 2px;
    background-color: #0a78d4;
}

.app-badge {
    position: absolute;
    top: 8px;
    left: 29.500px;
    width: 20px;
    height: 20px;
    border-radius: 50%;
    background-color: #0a78d8;
    color: #fff;
    font-size: 13px;
    line-height: 20px;
    text-align: center;
}

.app-badge.wide {
    left: 27.500px;
    width: 25px;
    border-radius: 10px;
}

.svg-t {
    font: bold 11px 'Liberation Sans', sans-serif;
    fill: #4b53bc;
}

.svg-help {
    font: bold 20px 'Liberation Sans', sans-serif;
    fill: #fff;
}

.svg-z {
    font: bold 8px 'Liberation Sans', sans-serif;
    fill: #222;
}

.svg-zz {
    font: bold 7px 'Liberation Sans', sans-serif;
    fill: #eee;
}

.tray {
    margin-left: 85.500px;
    flex: 1;
    display: flex;
    align-items: center;
    height: 100%;
    font-size: 14.500px;
}

.tray-chevron {
    width: 14px;
    display: flex;
}

.tray-sync {
    width: 22px;
    margin-left: 24px;
    display: flex;
}

.tray-lang {
    width: 40px;
    margin-left: 15px;
    display: flex;
    flex-direction: column;
    align-items: center;
    line-height: 20px;
}

.tray-icon {
    width: 30px;
    display: flex;
    justify-content: center;
}

.tray-icon.wifi {
    margin-left: 11px;
}

.tray-clock {
    width: 90px;
    margin-left: 3px;
    display: flex;
    flex-direction: column;
    align-items: flex-end;
    line-height: 20px;
}

.tray-bell {
    margin-left: 12px;
    display: flex;
}

.tray-copilot {
    margin-left: 21px;
    margin-bottom: 4px;
    position: relative;
    display: flex;
}

.pre-tag {
    position: absolute;
    right: -1px;
    bottom: -6px;
    width: 23px;
    background-color: #f5c518;
    border-radius: 2px;
    font: bold 8px/9px 'Liberation Sans', sans-serif;
    color: #222;
    text-align: center;
}
```
